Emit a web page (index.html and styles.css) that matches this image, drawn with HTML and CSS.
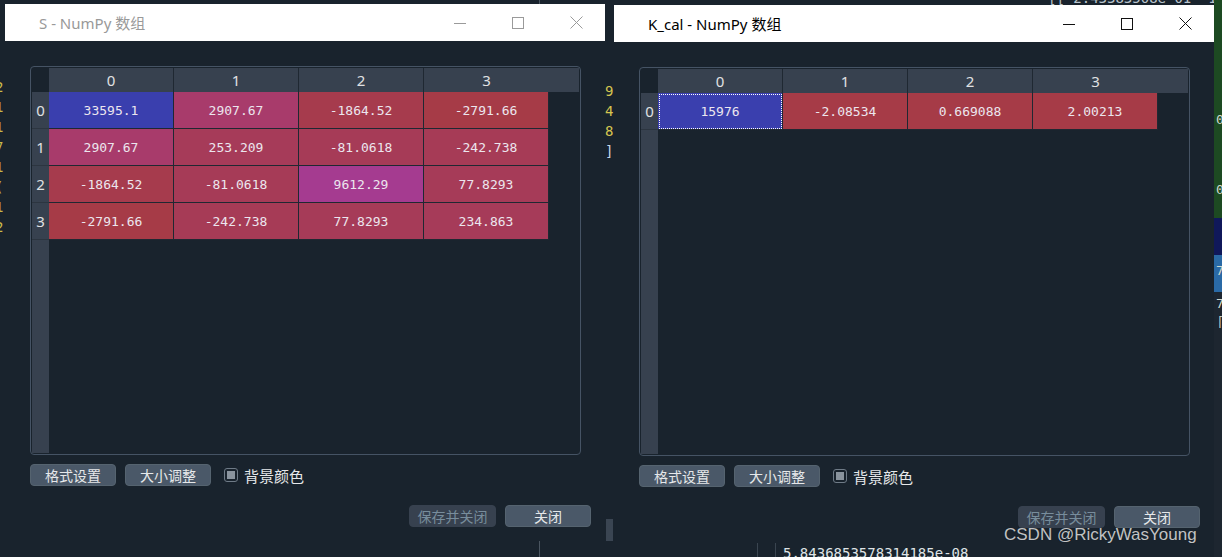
FILE: index.html
```html
<!DOCTYPE html>
<html lang="zh-CN">
<head>
<meta charset="utf-8">
<title>NumPy 数组</title>
<link rel="stylesheet" href="styles.css">
</head>
<body>
<div class="bg-left-text"><span>2</span><span>1</span><span>1</span><span>7</span><span>1</span><span>(</span><span>1</span><span>2</span></div>
<div class="bg-mid-text"><span class="y">9</span><span class="y">4</span><span class="y">8</span><span class="w">]</span></div>
<div class="bg-mid-scroll"></div>
<div class="bg-vline top"></div>
<div class="bg-vline bottom"></div>
<div class="bg-top-text">[[ 2.43383508e-01  1.0</div>
<div class="bg-right">
  <div class="seg green"><span>0</span><span class="low">0</span></div>
  <div class="seg navy"></div>
  <div class="seg blue"><span>7</span></div>
  <div class="seg dark"><span>7</span><span>卩</span></div>
</div>
<div class="bg-bottom-text">5.8436853578314185e-08</div>
<div class="bg-bottom-lines"></div>

<section class="win win-s inactive">
  <header class="titlebar">
    <span class="title">S - NumPy 数组</span>
    <div class="caption">
      <span class="cap"><svg width="12" height="12" viewBox="0 0 12 12"><path d="M0 6.5H12"/></svg></span>
      <span class="cap"><svg width="12" height="12" viewBox="0 0 12 12"><rect x="0.5" y="0.5" width="11" height="11"/></svg></span>
      <span class="cap"><svg width="13" height="13" viewBox="0 0 13 13"><path d="M0.5 0.5L12.5 12.5M12.5 0.5L0.5 12.5"/></svg></span>
    </div>
  </header>
  <div class="body">
    <div class="frame">
      <div class="vheader">
        <div class="corner"></div>
        <div class="vh">0</div>
        <div class="vh">1</div>
        <div class="vh">2</div>
        <div class="vh">3</div>
      </div>
      <div class="main">
        <div class="hrow">
          <div class="hh">0</div><div class="hh">1</div><div class="hh">2</div><div class="hh">3</div>
        </div>
        <div class="row">
          <div class="cell c-max">33595.1</div>
          <div class="cell c-2907">2907.67</div>
          <div class="cell c-1864">-1864.52</div>
          <div class="cell c-min">-2791.66</div>
        </div>
        <div class="row">
          <div class="cell c-2907">2907.67</div>
          <div class="cell c-253">253.209</div>
          <div class="cell c-81">-81.0618</div>
          <div class="cell c-242">-242.738</div>
        </div>
        <div class="row">
          <div class="cell c-1864">-1864.52</div>
          <div class="cell c-81">-81.0618</div>
          <div class="cell c-9612">9612.29</div>
          <div class="cell c-77">77.8293</div>
        </div>
        <div class="row">
          <div class="cell c-min">-2791.66</div>
          <div class="cell c-242">-242.738</div>
          <div class="cell c-77">77.8293</div>
          <div class="cell c-234">234.863</div>
        </div>
      </div>
    </div>
    <div class="tools">
      <button class="btn">格式设置</button>
      <button class="btn">大小调整</button>
      <label class="check"><span class="box"><span class="mark"></span></span>背景颜色</label>
    </div>
    <div class="actions">
      <button class="btn wide disabled">保存并关闭</button>
      <button class="btn">关闭</button>
    </div>
  </div>
</section>

<section class="win win-k">
  <header class="titlebar">
    <span class="title">K_cal - NumPy 数组</span>
    <div class="caption">
      <span class="cap"><svg width="12" height="12" viewBox="0 0 12 12"><path d="M0 6.5H12"/></svg></span>
      <span class="cap"><svg width="12" height="12" viewBox="0 0 12 12"><rect x="0.5" y="0.5" width="11" height="11"/></svg></span>
      <span class="cap"><svg width="13" height="13" viewBox="0 0 13 13"><path d="M0.5 0.5L12.5 12.5M12.5 0.5L0.5 12.5"/></svg></span>
    </div>
  </header>
  <div class="body">
    <div class="frame">
      <div class="vheader">
        <div class="corner"></div>
        <div class="vh">0</div>
      </div>
      <div class="main">
        <div class="hrow">
          <div class="hh">0</div><div class="hh">1</div><div class="hh">2</div><div class="hh">3</div>
        </div>
        <div class="row">
          <div class="cell c-max selected">15976</div>
          <div class="cell c-min">-2.08534</div>
          <div class="cell c-min">0.669088</div>
          <div class="cell c-min">2.00213</div>
        </div>
      </div>
    </div>
    <div class="tools">
      <button class="btn">格式设置</button>
      <button class="btn">大小调整</button>
      <label class="check"><span class="box"><span class="mark"></span></span>背景颜色</label>
    </div>
    <div class="actions">
      <button class="btn wide disabled">保存并关闭</button>
      <button class="btn">关闭</button>
    </div>
  </div>
</section>

<div class="watermark">CSDN @RickyWasYoung</div>
</body>
</html>
```

FILE: styles.css
```css
* { box-sizing: border-box; }
html, body { margin: 0; padding: 0; }
body {
  width: 1222px;
  height: 557px;
  overflow: hidden;
  position: relative;
  background: #19232d;
  font-family: "Noto Sans", "Noto Sans CJK SC", sans-serif;
  color: #e0e1e3;
}

/* ---------- background (IDE behind the dialogs) ---------- */
.bg-left-text {
  position: absolute;
  left: -5px;
  top: 80px;
  display: flex;
  flex-direction: column;
  gap: 6px;
  font-family: "DejaVu Sans Mono", monospace;
  font-size: 14px;
  line-height: 14px;
  color: #c9b94a;
}
.bg-mid-text {
  position: absolute;
  left: 605px;
  top: 81px;
  display: flex;
  flex-direction: column;
  font-family: "DejaVu Sans Mono", monospace;
  font-size: 14px;
  line-height: 20px;
}
.bg-mid-text .y { color: #d6c550; }
.bg-mid-text .w { color: #c8d4e6; }
.bg-mid-scroll {
  position: absolute;
  left: 606px;
  top: 519px;
  width: 7px;
  height: 22px;
  background: #3a4552;
}
.bg-vline {
  position: absolute;
  left: 539px;
  width: 1px;
  background: #4a5560;
}
.bg-vline.top { top: 0; height: 4px; }
.bg-vline.bottom { top: 541px; height: 16px; }
.bg-top-text {
  position: absolute;
  left: 1048px;
  top: -10px;
  font-family: "DejaVu Sans Mono", monospace;
  font-size: 14px;
  color: #b9c4cc;
  white-space: pre;
}
.bg-right {
  position: absolute;
  left: 1214px;
  top: 0;
  width: 8px;
  height: 557px;
  display: flex;
  flex-direction: column;
  background: #1d2630;
  font-family: "DejaVu Sans Mono", monospace;
  font-size: 13px;
  color: #cfd8cf;
}
.bg-right .seg { display: flex; flex-direction: column; padding-left: 2px; overflow: hidden; }
.bg-right .green { height: 218px; background: #1d4a22; padding-top: 112px; }
.bg-right .green .low { margin-top: 55px; }
.bg-right .navy { height: 37px; background: #10185a; }
.bg-right .blue { height: 37px; background: #2a6aa6; padding-top: 8px; }
.bg-right .dark { height: 40px; padding-top: 4px; }
.bg-bottom-text {
  position: absolute;
  left: 783px;
  top: 545px;
  font-family: "DejaVu Sans Mono", monospace;
  font-size: 14px;
  color: #dfe3e6;
}
.bg-bottom-lines {
  position: absolute;
  left: 757px;
  top: 543px;
  width: 19px;
  height: 14px;
  border-left: 1px solid #3a4550;
  border-right: 1px solid #3a4550;
}
.watermark {
  position: absolute;
  left: 1004px;
  top: 525px;
  font-family: "Liberation Sans", Arial, sans-serif;
  font-size: 17px;
  color: rgba(235, 235, 235, 0.82);
  text-shadow: 0 0 1px rgba(0, 0, 0, 0.4);
}

/* ---------- dialog windows ---------- */
.win {
  position: absolute;
  width: 600px;
  display: flex;
  flex-direction: column;
  background: #19232d;
}
.win-s { left: 5px; top: 4px; }
.win-k { left: 614px; top: 5px; }

.titlebar {
  height: 37px;
  background: #ffffff;
  display: flex;
  align-items: center;
}
.title {
  padding-left: 34px;
  font-size: 15px;
  color: #000000;
  font-family: "Noto Sans", "Noto Sans CJK SC", sans-serif;
}
.inactive .title { color: #999999; }
.caption {
  margin-left: auto;
  display: flex;
  height: 100%;
}
.cap {
  width: 58px;
  display: flex;
  align-items: center;
  justify-content: center;
}
.cap svg { stroke: #111111; fill: none; stroke-width: 1; }
.inactive .cap svg { stroke: #9a9a9a; }

.body {
  height: 500px;
  padding: 25px 14px 14px 25px;
  display: flex;
  flex-direction: column;
}

.frame {
  width: 551px;
  height: 389px;
  border: 1px solid #455364;
  border-radius: 4px;
  padding: 1px;
  display: flex;
}
.vheader {
  width: 17px;
  display: flex;
  flex-direction: column;
  background: #37414f;
}
.corner { height: 24px; background: #19232d; }
.vh {
  height: 37px;
  border-bottom: 1px solid #2c3540;
  display: flex;
  align-items: center;
  justify-content: center;
  font-size: 15px;
  color: #e0e1e3;
}
.main {
  flex: 1;
  display: flex;
  flex-direction: column;
}
.hrow {
  height: 24px;
  background: #37414f;
  display: flex;
}
.hh {
  width: 125px;
  border-right: 1px solid #1f2832;
  display: flex;
  align-items: center;
  justify-content: center;
  font-size: 15px;
  color: #e0e1e3;
}
.hh:last-child { border-right: none; }
.row { height: 37px; display: flex; }
.cell {
  width: 125px;
  height: 37px;
  border-right: 1px solid #1f2832;
  border-bottom: 1px solid #1f2832;
  display: flex;
  align-items: center;
  justify-content: center;
  font-family: "DejaVu Sans Mono", monospace;
  font-size: 13px;
  color: #ece6ee;
}
.cell.selected { outline: 1px dotted #ffffff; outline-offset: -2px; }

/* value-mapped background colours */
.c-max  { background: #3a3fae; }
.c-2907 { background: #a83b6b; }
.c-1864 { background: #a63b4d; }
.c-min  { background: #a63b47; }
.c-253  { background: #a63b59; }
.c-81   { background: #a63b57; }
.c-242  { background: #a63b56; }
.c-9612 { background: #a53b90; }
.c-77   { background: #a63b58; }
.c-234  { background: #a63b59; }

.tools {
  margin-top: 9px;
  height: 22px;
  display: flex;
  align-items: center;
  gap: 9px;
}
.btn {
  width: 86px;
  height: 22px;
  padding: 0;
  background: #4a5868;
  border: 1px solid #55636f;
  border-radius: 4px;
  color: #e6e8ea;
  font-family: "Noto Sans CJK SC", sans-serif;
  font-size: 14px;
  line-height: 20px;
}
.btn.wide { width: 87px; }
.btn.disabled { background: #37414f; border-color: #37414f; color: #788d9c; }
.check {
  margin-left: 4px;
  display: flex;
  align-items: center;
  gap: 6px;
  font-family: "Noto Sans CJK SC", sans-serif;
  font-size: 15px;
  color: #e6e8ea;
}
.box {
  width: 14px;
  height: 14px;
  border: 1px solid #6f7b87;
  border-radius: 3px;
  background: #19232d;
  display: flex;
  align-items: center;
  justify-content: center;
}
.mark { width: 8px; height: 8px; background: #8a949e; }

.actions {
  margin-top: 19px;
  height: 22px;
  display: flex;
  justify-content: flex-end;
  gap: 9px;
}
```
